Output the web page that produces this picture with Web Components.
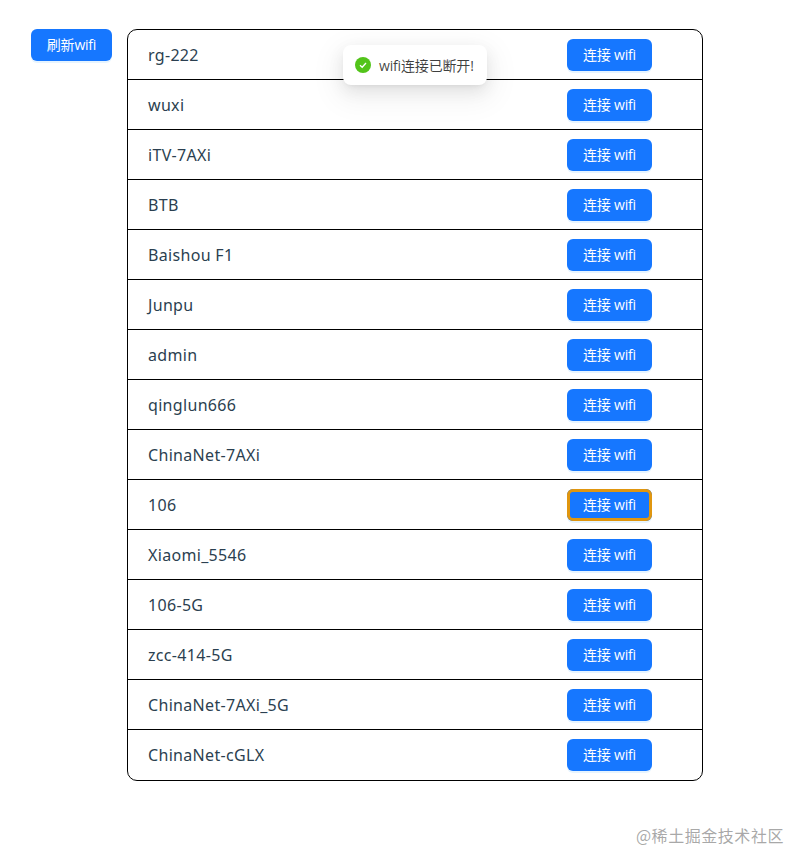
<!DOCTYPE html>
<html lang="zh-CN">
<head>
<meta charset="utf-8">
<style>
html,body{margin:0;padding:0;background:#fff}
body{width:789px;height:852px;overflow:hidden;position:relative;font-family:"Open Sans","Noto Sans CJK SC",sans-serif}
</style>
</head>
<body>
<wifi-page></wifi-page>
<script>
const FONT = '"Open Sans","Noto Sans CJK SC",sans-serif';
class AntButton extends HTMLElement{
  constructor(){super();this.attachShadow({mode:'open'}).innerHTML=`<style>
  :host{display:inline-flex;box-sizing:border-box;height:32px;align-items:center;justify-content:center;background:#1677ff;color:#fff;border-radius:6px;font:14px/22px ${FONT};box-shadow:0 2px 0 rgba(5,145,255,.1);white-space:pre;letter-spacing:-.2px}
  :host([focused]){outline:3px solid #e0960f;outline-offset:-3px;}
  </style><slot></slot>`;}
}
customElements.define('ant-button',AntButton);
class WifiRow extends HTMLElement{
  constructor(){super();this.attachShadow({mode:'open'}).innerHTML=`<style>
  :host{display:flex;align-items:center;height:50px;box-sizing:border-box;padding-left:20px;border-bottom:1px solid #000;color:#2b3f50;font:16px "Noto Sans","Noto Sans CJK SC",sans-serif;letter-spacing:.32px}
  :host(:last-child){border-bottom:0;height:50px}
  .name{flex:1}
  ant-button{width:85px;margin-right:50px}
  </style><span class="name"><slot></slot></span><ant-button part="btn">连接 wifi</ant-button>`;
  }
  connectedCallback(){if(this.hasAttribute('focused'))this.shadowRoot.querySelector('ant-button').setAttribute('focused','');}
}
customElements.define('wifi-row',WifiRow);
class WifiToast extends HTMLElement{
  constructor(){super();this.attachShadow({mode:'open'}).innerHTML=`<style>
  :host{position:absolute;left:343px;top:45px;width:144px;height:40px;box-sizing:border-box;padding-left:12px;display:flex;align-items:center;gap:8px;background:#fff;border-radius:8px;color:rgba(0,0,0,.75);font:14px ${FONT};letter-spacing:-.16px;white-space:nowrap;box-shadow:0 6px 16px 0 rgba(0,0,0,.08),0 3px 6px -4px rgba(0,0,0,.12),0 9px 28px 8px rgba(0,0,0,.05)}
  svg{width:16px;height:16px;flex:none}
  </style><svg viewBox="0 0 16 16"><circle cx="8" cy="8" r="8" fill="#52c41a"/><path d="M5 8.2l2.2 2.1L11 6" fill="none" stroke="#fff" stroke-width="1.3"/></svg><span><slot></slot></span>`;}
}
customElements.define('wifi-toast',WifiToast);
class WifiList extends HTMLElement{
  constructor(){super();this.attachShadow({mode:'open'}).innerHTML=`<style>
  :host{display:block;width:576px;box-sizing:border-box;border:1px solid #000;border-radius:10px;overflow:hidden}
  </style><slot></slot>`;}
}
customElements.define('wifi-list',WifiList);
class WifiPage extends HTMLElement{
  constructor(){super();
    const names=['rg-222','wuxi','iTV-7AXi','BTB','Baishou F1','Junpu','admin','qinglun666','ChinaNet-7AXi','106','Xiaomi_5546','106-5G','zcc-414-5G','ChinaNet-7AXi_5G','ChinaNet-cGLX'];
    this.attachShadow({mode:'open'}).innerHTML=`<style>
    :host{display:flex;align-items:flex-start;gap:15px;padding:29px 0 0 31px}
    .refresh{width:81px}
    .mark{position:absolute;right:5px;bottom:5px;color:rgba(110,110,110,.6);font:16px "Noto Sans CJK SC",sans-serif;white-space:nowrap;letter-spacing:.55px}
    </style>
    <ant-button class="refresh">刷新wifi</ant-button>
    <wifi-list>${names.map((n,i)=>`<wifi-row${i===9?' focused':''}>${n}</wifi-row>`).join('')}</wifi-list>
    <wifi-toast>wifi连接已断开!</wifi-toast>
    <div class="mark">@稀土掘金技术社区</div>`;}
}
customElements.define('wifi-page',WifiPage);
</script>
</body>
</html>
